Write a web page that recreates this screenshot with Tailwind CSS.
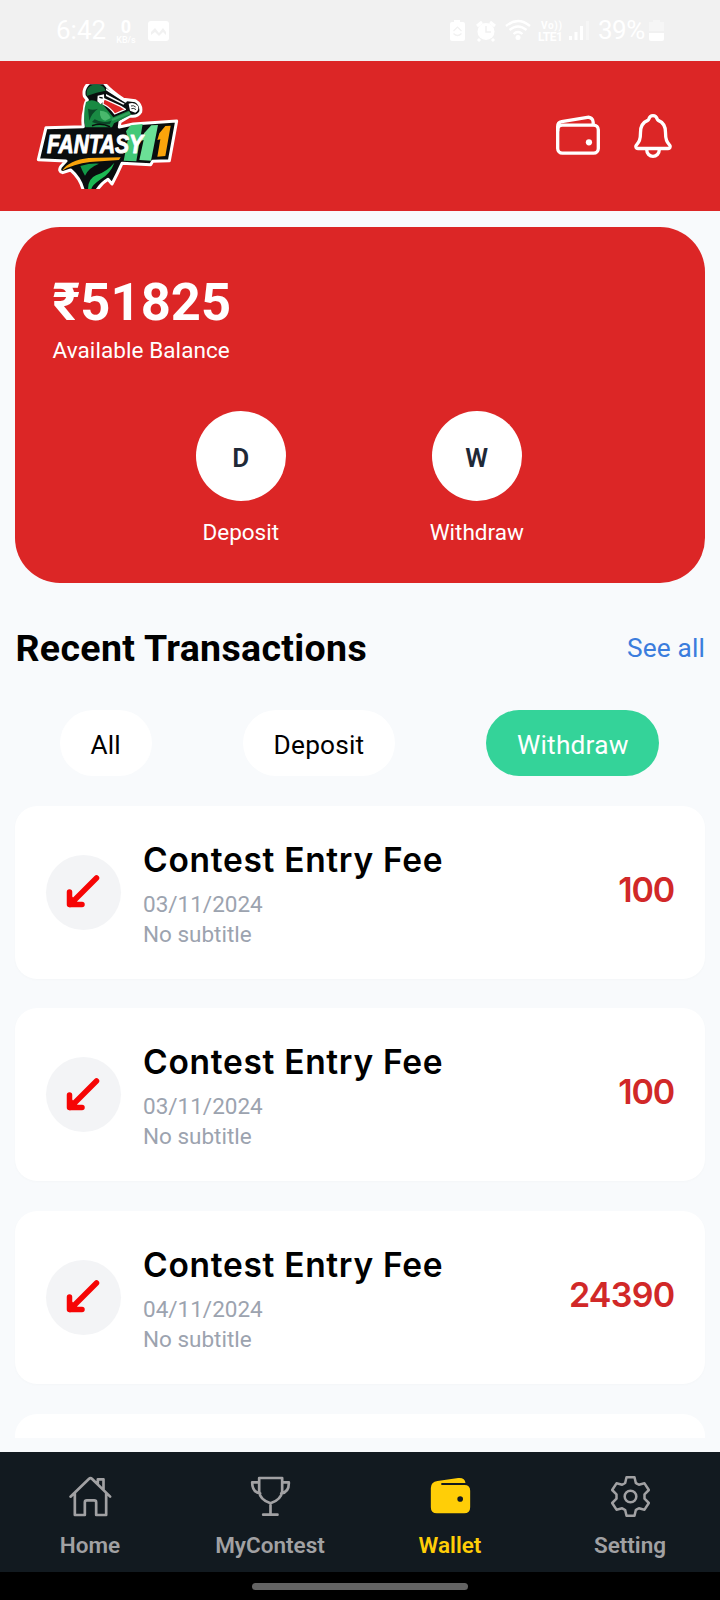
<!DOCTYPE html>
<html lang="en">
<head>
<meta charset="utf-8">
<title>Fantasy11 Wallet</title>
<script src="https://cdn.jsdelivr.net/npm/@tailwindcss/browser@4"></script>
</head>
<body class="w-[720px] h-[1600px] overflow-hidden bg-[#f8fafc] font-[Roboto,sans-serif] flex flex-col">

<!-- Status bar -->
<div class="h-[61px] shrink-0 bg-[#f1f1f1] text-white flex justify-between pl-[56px] pr-[56px]">
  <div class="flex">
    <span class="w-[50px] text-[26px] leading-[61px] whitespace-nowrap">6:42</span>
    <span class="ml-[8px] w-[24px] pt-[18px] flex flex-col items-center">
      <span class="text-[18px] leading-[17px] font-bold">0</span>
      <span class="text-[9px] leading-[10px] font-medium">KB/s</span>
    </span>
    <svg class="ml-[10px] mt-[20px]" width="22" height="22" viewBox="0 0 22 22"><rect x="0" y="1" width="21" height="20" rx="3" fill="#fff"/><path d="M3 15v-3l4-4 4 5 4-5 3 4v3l-3-3-4 4-4-4z" fill="#f1f1f1"/></svg>
  </div>
  <div class="flex">
    <svg class="mt-[18px]" width="148" height="26" viewBox="448 18 148 26" fill="#fff">
      <path d="M454 20h6v2h3q2 0 2 2v15q0 2-2 2h-11q-2 0-2-2V24q0-2 2-2h2z"/>
      <path d="M453.500 31l4-4 4 4M453.500 33.500q4 4 8 0" fill="none" stroke="#f1f1f1" stroke-width="1.200"/>
      <circle cx="486" cy="31.500" r="8.500"/><path d="M477 26l5-4M490 22l5 4M480 39l-2 2M492 39l2 2" stroke="#fff" stroke-width="3"/>
      <path d="M486 26v6h5" fill="none" stroke="#f1f1f1" stroke-width="1.500"/>
      <path d="M506 26q12-10 24 0M509.500 30q8.500-7 17 0M513.500 34q4.500-4 9 0" fill="none" stroke="#fff" stroke-width="2.300"/>
      <circle cx="518" cy="37.500" r="2.500"/>
      <text x="541" y="29" font-size="10" font-weight="700" textLength="21">Vo))</text>
      <text x="538" y="41" font-size="12" font-weight="700" textLength="25">LTE1</text>
      <path d="M569 36h3v4h-3zM574.500 32h3v8h-3zM580 26h3v14h-3z"/><path d="M586 21h3v19h-3z" opacity=".4"/>
    </svg>
    <span class="ml-[2px] w-[49px] text-[26px] leading-[61px] tracking-[-0.5px] whitespace-nowrap">39%</span>
    <svg class="mt-[20px] ml-[2px]" width="15" height="22" viewBox="0 0 15 22"><path d="M4 0h7v2h4v9H0V2h4z" fill="#fff" opacity=".4"/><path d="M0 13h15v6q0 2-2 2H2q-2 0-2-2z" fill="#fff"/></svg>
  </div>
</div>

<!-- Header -->
<div class="h-[150px] shrink-0 bg-[#dc2626] flex justify-between pl-[30px] pr-[42.500px]">
  <svg class="mt-[9px]" width="160" height="130" viewBox="0 0 480 390" role="img" aria-label="Fantasy11">
    <defs><clipPath id="lc"><rect x="0" y="42" width="480" height="315"/></clipPath></defs>
    <g clip-path="url(#lc)" stroke-linejoin="round">
      <g fill="#0a0d0e" stroke="#fff" stroke-width="9">
        <path d="M48 173L160 170Q156 145 163 120Q164 98 172 90L163 78Q158 55 178 38L222 38Q236 58 280 88L316 92Q336 104 332 126Q322 142 300 138L270 156L268 171L310 162L440 153L418 272L368 274L362 284L276 280Q262 312 246 342L234 328Q214 340 200 362L160 362Q152 326 122 300L98 308Q84 304 92 290L108 273L25 269Z"/>
      </g>
      <path d="M168 96Q186 86 202 96L218 103L250 142L296 122L304 134L252 160L246 172L166 172Q158 130 168 96Z" fill="#198a43"/>
      <path d="M221 86L272 109L286 118L254 132Q242 114 219 102Z" fill="#dc2626" stroke="#fff" stroke-width="4"/>
      <path d="M170 62Q176 44 200 43Q222 46 227 62L200 68L170 78Z" fill="#136b38"/>
      <path d="M203 77L222 73L223 92L212 103L202 94Z" fill="#fff"/>
      <path d="M208 80l10 2v4l-10-2z" fill="#0a0d0e"/>
      <path d="M228 55L292 95L286 98L228 61ZM228 72L284 101L280 104L228 78Z" fill="#fff"/>
      <path d="M296 101Q312 94 324 108Q328 122 316 128L300 122Z" fill="#fff"/>
      <path d="M303 108q8-3 14 3M304 116q8-3 14 3" fill="none" stroke="#0a0d0e" stroke-width="2.500"/>
      <path d="M174 116Q188 122 204 116Q184 130 178 152M194 148Q218 162 244 152L240 162Q210 168 186 156Z" fill="#0b4727"/>
      <path d="M210 122Q234 122 242 144L226 152Q208 148 210 122Z" fill="#48b86c"/>
      <path d="M246 150L300 128" stroke="#33a35a" stroke-width="7" fill="none"/>
      <path d="M186 167q26-10 54 3" stroke="#0a0d0e" stroke-width="5" fill="none"/>
      <path d="M288 184L302 166L338 162L319 274L281 272L294 206Z" fill="#43c978"/>
      <path d="M342 190L364 166L384 165L363 272L328 270L341 210L334 212Z" fill="#6be096"/>
      <path d="M388 190L406 168L422 167L406 258L382 260L391 208L382 210Z" fill="#fba40b"/>
      <text x="51" y="249" font-family="Liberation Sans,Arial,sans-serif" font-weight="700" font-style="italic" font-size="79" textLength="288" lengthAdjust="spacingAndGlyphs" fill="#fff" stroke="#fff" stroke-width="3">FANTASY</text>
      <path d="M96 302Q118 270 176 264L272 262L267 270L180 276Q130 282 96 302Z" fill="#fba40b"/>
      <path d="M151 288Q182 279 207 281Q176 293 165 317Q158 306 151 288Z" fill="#129947"/>
      <path d="M253 278Q242 310 212 328Q186 346 184 357L174 357Q174 326 198 316Q232 304 253 278Z" fill="#1cb953"/>
    </g>
  </svg>
  <div class="flex items-center gap-[25px]">
    <svg width="50" height="50" viewBox="0 0 512 512" fill="none" stroke="#fff" stroke-width="34" stroke-linejoin="round"><rect x="48" y="144" width="416" height="288" rx="48"/><path d="M411.360 144v-30A50 50 0 0 0 352 64.900L88.640 109.850A50 50 0 0 0 48 159v49"/><circle cx="368" cy="320" r="32" fill="#fff" stroke="none"/></svg>
    <svg width="50" height="50" viewBox="0 0 512 512" fill="none" stroke="#fff" stroke-width="34" stroke-linejoin="round" stroke-linecap="round"><path d="M427.680 351.430C402 320 383.870 304 383.870 217.350 383.870 138 343.350 109.730 310 96c-4.430-1.820-8.600-6-9.950-10.550C294.200 65.540 277.800 48 256 48s-38.210 17.550-44 37.470c-1.350 4.600-5.520 8.710-9.950 10.530-33.390 13.750-73.870 41.920-73.870 121.350C128.130 304 110 320 84.320 351.430 73.680 364.450 83 384 101.610 384h308.880c18.510 0 27.780-19.610 17.190-32.570ZM320 384v16a64 64 0 0 1-128 0v-16"/></svg>
  </div>
</div>

<!-- Scrolling content -->
<div class="h-[1227px] shrink-0 overflow-hidden px-[15px] pt-[15.500px]">
  <div class="h-[356.500px] rounded-[45px] bg-[#dc2626] px-[37.500px] pt-[45.500px] text-white">
    <div class="text-[52.500px] leading-[60px] tracking-[0.1px] font-bold">₹51825</div>
    <div class="mt-[2.500px] text-[22.500px] leading-[30px] tracking-[0.08px]">Available Balance</div>
    <div class="mt-[46px] flex justify-center gap-[143px] -ml-[2.500px]">
      <div class="w-[93px] flex flex-col items-center">
        <div class="size-[90px] rounded-full bg-white text-[#1f2937] text-[26px] leading-[94px] font-semibold text-center">D</div>
        <div class="mt-[16px] text-[22.500px] leading-[30px]">Deposit</div>
      </div>
      <div class="w-[93px] flex flex-col items-center">
        <div class="size-[90px] rounded-full bg-white text-[#1f2937] text-[26px] leading-[94px] font-semibold text-center">W</div>
        <div class="mt-[16px] text-[22.500px] leading-[30px]">Withdraw</div>
      </div>
    </div>
  </div>

  <div class="mt-[40px] h-[50px] flex justify-between items-center">
    <h2 class="ml-[0.500px] text-[37.500px] leading-[50px] tracking-[0.33px] font-bold text-black">Recent Transactions</h2>
    <a class="text-[26.250px] leading-[50px] tracking-[0.15px] text-[#3b7ddd]">See all</a>
  </div>

  <div class="mt-[37px] -ml-[1px] flex justify-around text-[26.250px] leading-[70px] tracking-[0.2px] text-center text-black">
    <div class="w-[92px] h-[66px] rounded-full bg-white">All</div>
    <div class="w-[152px] h-[66px] rounded-full bg-white">Deposit</div>
    <div class="w-[173px] h-[66px] rounded-full bg-[#34d399] text-white">Withdraw</div>
  </div>

  <div id="list" class="mt-[29.500px] flex flex-col gap-[29.700px]">
    <div class="h-[173px] shrink-0 rounded-[22px] bg-white shadow-[0_1px_3px_rgba(0,0,0,0.02)] flex px-[30px]">
      <div class="mt-[49px] ml-[0.500px] size-[75px] rounded-full bg-[#f3f4f6] flex items-center justify-center">
        <svg width="36" height="36" viewBox="0 0 36 36" fill="none" stroke="#f60505" stroke-width="5.500" stroke-linecap="round" stroke-linejoin="round"><path d="M31.500 4L5 30.500M4.500 18v12.500h12.500"/><path d="M5 22v8h8z" fill="#f60505" stroke-width="2"/></svg>
      </div>
      <div class="ml-[22.500px] pt-[32px] flex-1">
        <div class="font-[Inter,sans-serif] font-semibold text-[33.500px] leading-[45px] tracking-[0.7px] text-black whitespace-nowrap">Contest Entry Fee</div>
        <div class="mt-[6px] text-[22.500px] leading-[30px] text-[#9ca3af]">03/11/2024</div>
        <div class="text-[22.500px] leading-[30px] text-[#9ca3af]">No subtitle</div>
      </div>
      <div class="pt-[61px] mr-[1px] font-[Inter,sans-serif] font-semibold text-[34px] leading-[46px] tracking-[-1.200px] text-[#d12828]">100</div>
    </div>
    <div class="h-[173px] shrink-0 rounded-[22px] bg-white shadow-[0_1px_3px_rgba(0,0,0,0.02)] flex px-[30px]">
      <div class="mt-[49px] ml-[0.500px] size-[75px] rounded-full bg-[#f3f4f6] flex items-center justify-center">
        <svg width="36" height="36" viewBox="0 0 36 36" fill="none" stroke="#f60505" stroke-width="5.500" stroke-linecap="round" stroke-linejoin="round"><path d="M31.500 4L5 30.500M4.500 18v12.500h12.500"/><path d="M5 22v8h8z" fill="#f60505" stroke-width="2"/></svg>
      </div>
      <div class="ml-[22.500px] pt-[32px] flex-1">
        <div class="font-[Inter,sans-serif] font-semibold text-[33.500px] leading-[45px] tracking-[0.7px] text-black whitespace-nowrap">Contest Entry Fee</div>
        <div class="mt-[6px] text-[22.500px] leading-[30px] text-[#9ca3af]">03/11/2024</div>
        <div class="text-[22.500px] leading-[30px] text-[#9ca3af]">No subtitle</div>
      </div>
      <div class="pt-[61px] mr-[1px] font-[Inter,sans-serif] font-semibold text-[34px] leading-[46px] tracking-[-1.200px] text-[#d12828]">100</div>
    </div>
    <div class="h-[173px] shrink-0 rounded-[22px] bg-white shadow-[0_1px_3px_rgba(0,0,0,0.02)] flex px-[30px]">
      <div class="mt-[49px] ml-[0.500px] size-[75px] rounded-full bg-[#f3f4f6] flex items-center justify-center">
        <svg width="36" height="36" viewBox="0 0 36 36" fill="none" stroke="#f60505" stroke-width="5.500" stroke-linecap="round" stroke-linejoin="round"><path d="M31.500 4L5 30.500M4.500 18v12.500h12.500"/><path d="M5 22v8h8z" fill="#f60505" stroke-width="2"/></svg>
      </div>
      <div class="ml-[22.500px] pt-[32px] flex-1">
        <div class="font-[Inter,sans-serif] font-semibold text-[33.500px] leading-[45px] tracking-[0.7px] text-black whitespace-nowrap">Contest Entry Fee</div>
        <div class="mt-[6px] text-[22.500px] leading-[30px] text-[#9ca3af]">04/11/2024</div>
        <div class="text-[22.500px] leading-[30px] text-[#9ca3af]">No subtitle</div>
      </div>
      <div class="pt-[61px] mr-[0.500px] font-[Inter,sans-serif] font-semibold text-[34px] leading-[46px] tracking-[-0.700px] text-[#d12828]">24390</div>
    </div>
    <div class="h-[173px] shrink-0 rounded-[22px] bg-white"></div>
  </div>
</div>

<div class="h-[14px] shrink-0"></div>

<!-- Bottom navigation -->
<div class="h-[120px] shrink-0 bg-[#121a20] grid grid-cols-4 pt-[22px] text-[22.500px] leading-[30px] font-semibold text-[#a1a1a3]">
  <div class="flex flex-col items-center gap-[11px]">
    <svg width="45" height="45" viewBox="203.500 222 135 135" fill="none" stroke="currentColor" stroke-width="8" stroke-linecap="round" stroke-linejoin="round"><path d="M211 290L266 237Q271 232 276 237L330 290M224 280V345H254V307Q254 301 260 301H282Q288 301 288 307V345H318V280M293 250V238H310V268"/></svg>
    <span>Home</span>
  </div>
  <div class="flex flex-col items-center gap-[11px]">
    <svg width="45" height="45" viewBox="743.500 222 135 135" fill="none" stroke="currentColor" stroke-width="8" stroke-linecap="round" stroke-linejoin="round"><path d="M777 234H846V274Q843 299 811 310Q779 299 777 274ZM811 310V343M789 344H832M777 247H756Q756 277 780 280M846 247H866Q867 277 843 280"/></svg>
    <span>MyContest</span>
  </div>
  <div class="flex flex-col items-center gap-[11px] text-[#ffce07]">
    <svg width="45" height="45" viewBox="203.500 222 135 135"><path d="M232 243L294 234Q314 232 316 249H245Q243 249 243 252T245 255H313Q330 255 330 272V322Q330 340 312 340H230Q212 340 212 322V264Q212 246 232 243Z" fill="currentColor"/><circle cx="300" cy="297" r="8.500" fill="#121a20"/></svg>
    <span>Wallet</span>
  </div>
  <div class="flex flex-col items-center gap-[11px]">
    <svg width="45" height="45" viewBox="743.500 222 135 135" fill="none" stroke="currentColor" stroke-width="7.500" stroke-linejoin="round"><path d="M799 232H823L827 249Q831 252 836 254L853 250L866 270L853 283V296L866 309L853 329L836 325Q831 327 827 330L823 347H799L795 330Q790 327 786 325L769 329L756 309L769 296V283L756 270L769 250L786 254Q790 252 795 249Z"/><circle cx="811" cy="289.500" r="17.500"/></svg>
    <span>Setting</span>
  </div>
</div>

<!-- Gesture bar -->
<div class="h-[28px] shrink-0 bg-black flex justify-center pt-[10.500px]">
  <div class="w-[216px] h-[7.500px] rounded-full bg-[#636363]"></div>
</div>
</body>
</html>
